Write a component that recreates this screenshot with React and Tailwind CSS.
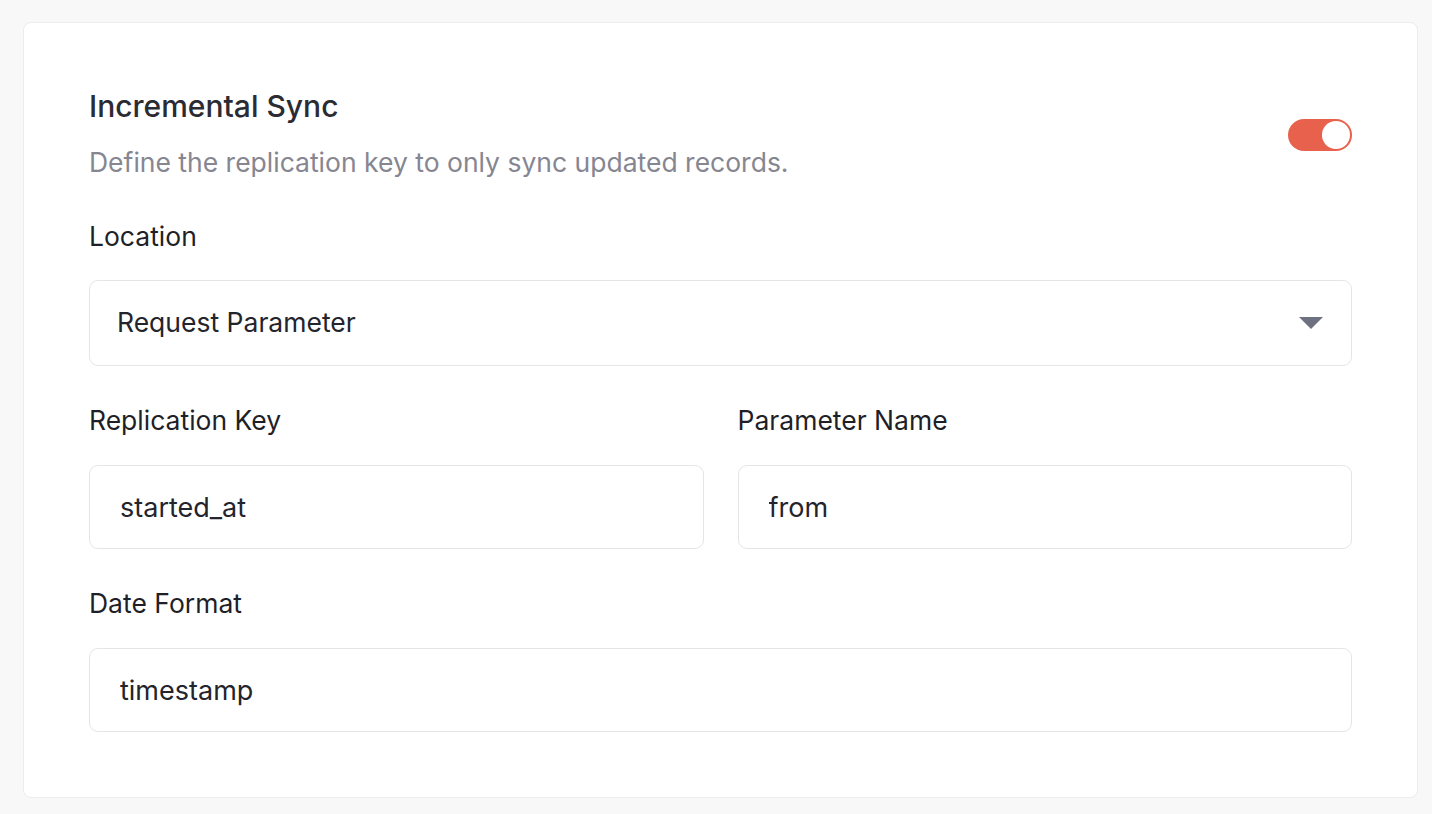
import React, { useState } from 'react';

const font = { fontFamily: 'Inter, "Noto Sans", sans-serif' };

const Field = ({ label, value, className = '' }) => (
  <div className={className}>
    <div className="text-[26.5px] leading-[32px] text-[#1f1f27]">{label}</div>
    <input
      type="text"
      defaultValue={value}
      className="mt-[29px] w-full h-[84px] pl-[30px] pr-4 border border-[#e5e5e7] rounded-[9px] text-[27px] text-[#24242c] outline-none bg-white"
    />
  </div>
);

const App = () => {
  const [enabled, setEnabled] = useState(true);

  return (
    <div className="min-h-screen bg-[#f8f8f8] pt-[22px] pl-[23px]" style={font}>
      <div className="w-[1395px] bg-white border border-[#ececec] rounded-lg pt-[65px] px-[65px] pb-[65px]">
        {/* Header */}
        <div className="flex items-center justify-between">
          <div>
            <h2 className="text-[30px] leading-[36px] font-medium text-[#2b2b33]">Incremental Sync</h2>
            <p className="mt-[22px] text-[26.5px] leading-[32px] text-[#868691]">
              Define the replication key to only sync updated records.
            </p>
          </div>
          <button
            onClick={() => setEnabled(!enabled)}
            className={`mt-[4px] w-[64px] h-[32px] rounded-full flex items-center px-[2px] ${enabled ? 'bg-[#e8614d] justify-end' : 'bg-gray-300 justify-start'}`}
          >
            <span className="w-[28px] h-[28px] rounded-full bg-white" />
          </button>
        </div>

        {/* Location */}
        <div className="mt-[42px] text-[26.5px] leading-[32px] text-[#1f1f27]">Location</div>
        <div className="mt-[28px] h-[86px] border border-[#e5e5e7] rounded-[9px] flex items-center justify-between pl-[27px] pr-[28px]">
          <span className="text-[26.5px] text-[#24242c]">Request Parameter</span>
          <svg width="24" height="12" viewBox="0 0 24 12">
            <path d="M0 0 L24 0 L12 12 Z" fill="#6e7280" />
          </svg>
        </div>

        {/* Replication key + parameter name */}
        <div className="mt-[38px] grid grid-cols-2 gap-x-[34px]">
          <Field label="Replication Key" value="started_at" />
          <Field label="Parameter Name" value="from" />
        </div>

        {/* Date format */}
        <Field label="Date Format" value="timestamp" className="mt-[38px]" />
      </div>
    </div>
  );
};

export default App;
